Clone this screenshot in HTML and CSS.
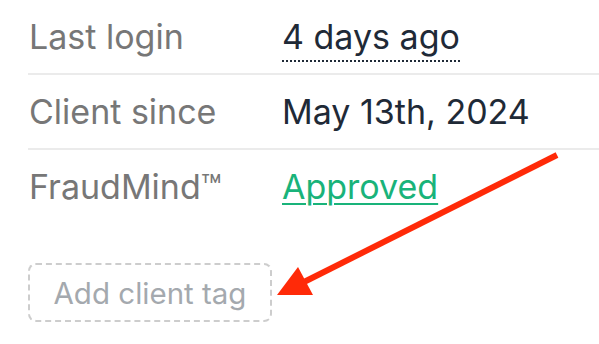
FILE: index.html
```html
<!DOCTYPE html>
<html>
<head>
<meta charset="utf-8">
<link rel="stylesheet" href="styles.css">
</head>
<body>
<div class="panel">
  <div class="row">
    <div class="label">Last login</div>
    <div class="value"><span class="dotted">4 days ago</span></div>
  </div>
  <div class="row">
    <div class="label">Client since</div>
    <div class="value">May 13th, 2024</div>
  </div>
  <div class="row last">
    <div class="label">FraudMind™</div>
    <div class="value"><a class="status">Approved</a></div>
  </div>
  <div class="tag-wrap">
    <div class="tag">Add client tag</div>
  </div>
</div>
<svg class="arrow" width="599" height="344" viewBox="0 0 599 344">
  <line x1="557" y1="155" x2="300" y2="284" stroke="#ff2a08" stroke-width="6"/>
  <polygon points="277,295 298,267 313,295" fill="#ff2a08"/>
</svg>
</body>
</html>
```
FILE: styles.css
```css
html, body {
  margin: 0;
  padding: 0;
  background: #ffffff;
}
body {
  font-family: Inter, "Noto Sans", sans-serif;
  width: 599px;
  height: 344px;
  overflow: hidden;
  position: relative;
}
.panel {
  padding-left: 28px;
}
.row {
  display: grid;
  grid-template-columns: 254px 1fr;
  align-items: center;
  height: 73px;
  border-bottom: 2px solid #ebebeb;
  font-size: 34px;
}
.row.last {
  border-bottom: none;
}
.label {
  color: #777777;
  padding-left: 1px;
}
.value {
  color: #1f2a37;
}
.dotted {
  border-bottom: 2px dotted #1f2a37;
  padding-bottom: 3px;
}
.status {
  color: #19b37a;
  text-decoration: underline;
  text-decoration-thickness: 2px;
  text-underline-offset: 4px;
}
.tag-wrap {
  padding-top: 40px;
  display: flex;
}
.tag {
  box-sizing: border-box;
  width: 244px;
  height: 59px;
  border: 2px dashed #cdcdcd;
  border-radius: 8px;
  color: #a4a9ae;
  font-size: 29.5px;
  display: flex;
  align-items: center;
  justify-content: center;
}
.arrow {
  position: absolute;
  left: 0;
  top: 0;
}
```
